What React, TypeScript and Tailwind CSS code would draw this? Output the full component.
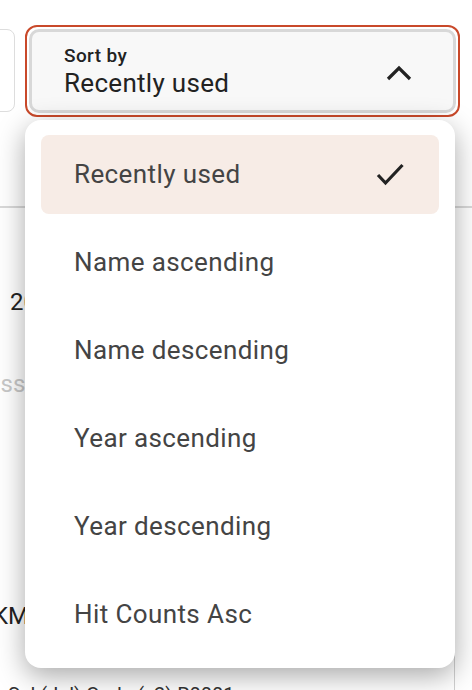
import React from "react";

const items = [
  "Recently used",
  "Name ascending",
  "Name descending",
  "Year ascending",
  "Year descending",
  "Hit Counts Asc",
];

export default function App() {
  return (
    <div
      className="relative w-[472px] h-[690px] overflow-hidden bg-white"
      style={{ fontFamily: "Roboto, 'Noto Sans', sans-serif" }}
    >
      {/* background page */}
      <div className="flex flex-col">
        <div className="flex items-start pt-[25px] gap-[10px]">
          <div className="mt-[4px] ml-[-30px] w-[45px] h-[83px] rounded-[8px] border-[1.5px] border-[#dddddd]" />
          <div className="w-[435px] h-[92px] rounded-[12px] border-2 border-[#c9492a] p-[2px]">
            <div className="h-full rounded-[10px] border-[3px] border-[#d8d8d8] bg-[#f8f8f8] flex items-center pl-[32px] pr-[44px]">
              <div className="flex flex-col flex-1 pt-[2px]">
                <span className="text-[19px] leading-[22px] font-medium text-[#222] tracking-[0.4px]">Sort by</span>
                <span className="text-[26px] leading-[32px] text-[#222] tracking-[0.3px]">Recently used</span>
              </div>
              <svg width="26" height="16" viewBox="0 0 26 16" className="mt-[3px] mr-[-3px]">
                <polyline points="2,14 13,3 24,14" fill="none" stroke="#222" strokeWidth="3.2" />
              </svg>
            </div>
          </div>
        </div>
        <div className="mt-[89px] h-[1.5px] bg-[#d9d9d9] w-full" />
        <div className="mt-[80px] pl-[10px] text-[24px] leading-[28px] text-[#222]">2023</div>
        <div className="mt-[54px] ml-[-34px] text-[24px] leading-[28px] text-[#c8c8c8]">Class</div>
        <div className="mt-[204px] ml-[-7px] text-[24px] leading-[28px] text-[#222]">KM</div>
        <div className="mt-[53px] pl-[8px] text-[20px] leading-[24px] text-[#333]">Sel (Jul) Code (x2) R0001</div>
      </div>
      <div className="absolute left-[454px] top-[640px] w-px h-[60px] bg-[#d0d0d0]" />

      {/* dropdown menu */}
      <div className="absolute left-[25px] top-[120px] w-[430px] rounded-[16px] bg-white pt-[15px] pb-[14px] px-[16px] flex flex-col gap-[9px] shadow-[0_8px_28px_rgba(0,0,0,0.34)]">
        {items.map((it, i) => (
          <div
            key={it}
            className={`h-[79px] rounded-[8px] flex items-center justify-between pl-[33px] pr-[35px] ${
              i === 0 ? "bg-[#f7ece6]" : ""
            }`}
          >
            <span className="text-[26px] text-[#444] tracking-[0.4px]">{it}</span>
            {i === 0 && (
              <svg width="28" height="24" viewBox="0 0 28 24">
                <polyline points="2,12 9.5,20 26.5,2" fill="none" stroke="#222" strokeWidth="3.2" />
              </svg>
            )}
          </div>
        ))}
      </div>
    </div>
  );
}
